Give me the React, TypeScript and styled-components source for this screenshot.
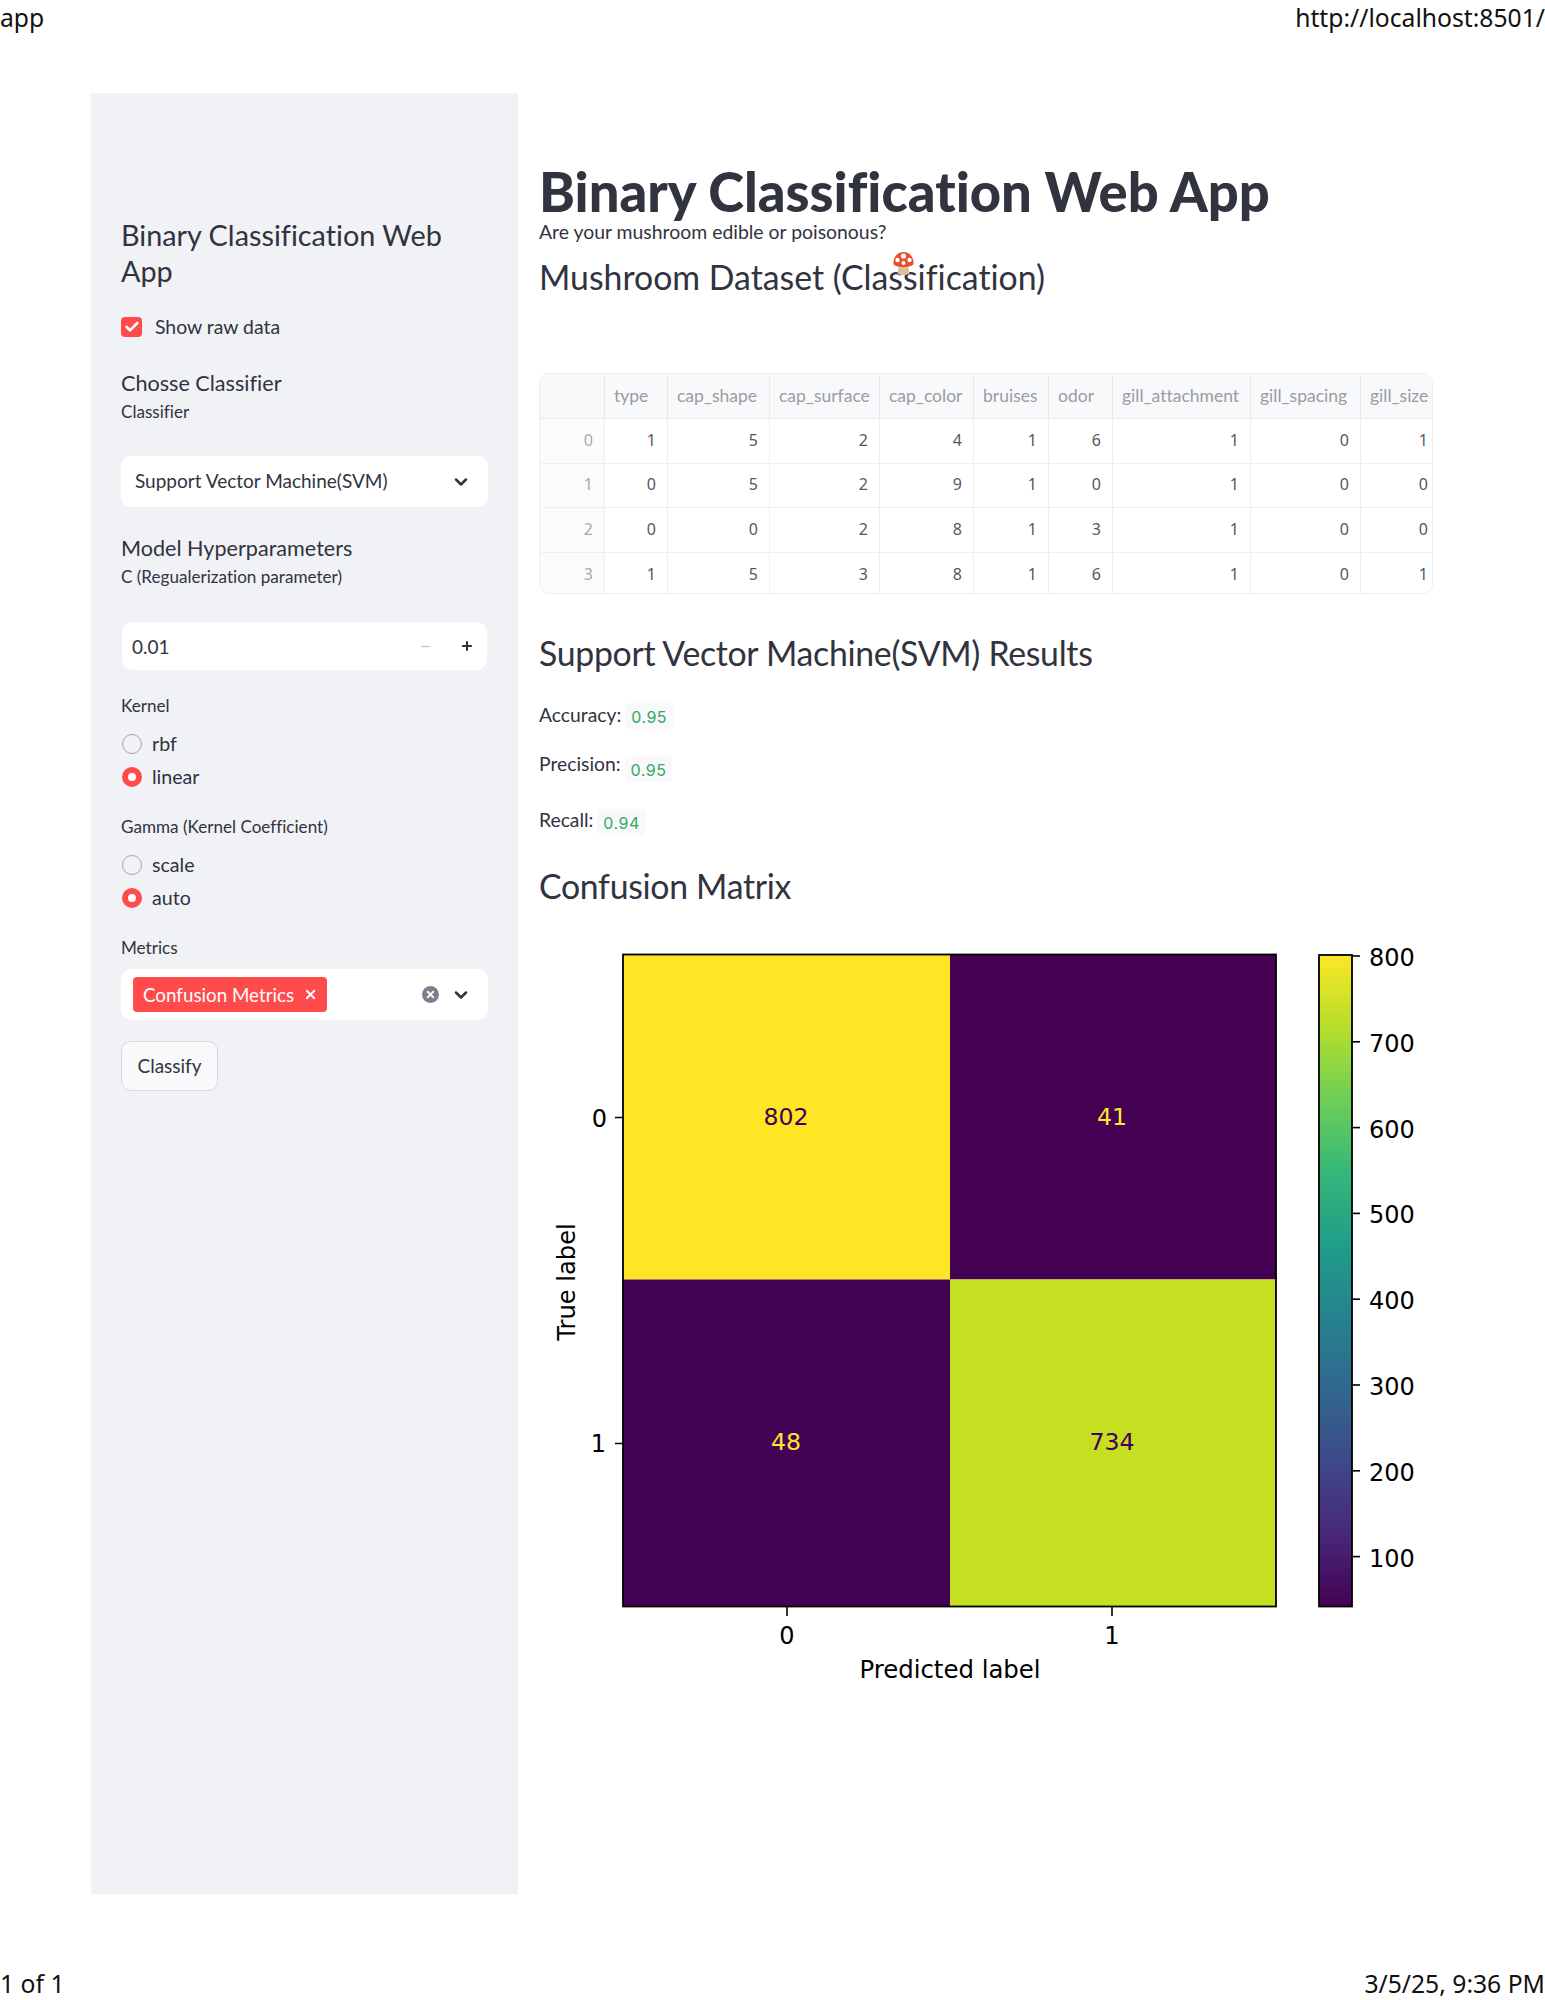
import * as React from "react";
import styled, { createGlobalStyle } from "styled-components";
import { ChevronDown, Check, X, Plus, Minus } from "lucide-react";

const GlobalStyle = createGlobalStyle`
  html, body {
    margin: 0;
    padding: 0;
    background: #fff;
  }
`;

const Page = styled.div`
  width: 1545px;
  height: 2000px;
  display: flex;
  flex-direction: column;
  color: #31333f;
  font-family: Lato, "Noto Sans", sans-serif;
  font-variant-ligatures: none;
  overflow: hidden;
`;

const PrintBar = styled.div`
  display: flex;
  justify-content: space-between;
  height: 36px;
  font-family: "Noto Sans", sans-serif;
  font-size: 24.7px;
  line-height: 36px;
  color: #111;
`;

const Body = styled.div`
  flex: 1;
  display: flex;
  padding: 57px 0 0 91px;
`;

const Sidebar = styled.aside`
  width: 427px;
  height: 1801px;
  box-sizing: border-box;
  padding: 124px 30px 0;
  background: #f0f2f6;
`;

const SideTitle = styled.div`
  font-size: 28.8px;
  line-height: 36px;
  width: 340px;
`;

const CheckRow = styled.div`
  display: flex;
  align-items: center;
  gap: 13px;
  height: 24px;
  margin-top: 26px;
  font-size: 19.4px;
`;

const CheckLabel = styled.span`
  margin-bottom: 2px;
`;

const CheckBox = styled.span`
  width: 21px;
  height: 20px;
  border-radius: 4px;
  background: #ff4b4b;
  color: #fff;
  display: flex;
  align-items: center;
  justify-content: center;
`;

const SideHeading = styled.div<{ $top: number }>`
  margin-top: ${(p) => p.$top}px;
  font-size: 21.6px;
  line-height: 28px;
`;

const FieldLabel = styled.div<{ $top: number }>`
  margin-top: ${(p) => p.$top}px;
  font-size: 17.1px;
  line-height: 20px;
`;

const SelectBox = styled.div<{ $top: number }>`
  margin-top: ${(p) => p.$top}px;
  height: 51px;
  box-sizing: border-box;
  padding: 0 17px 0 14px;
  display: flex;
  align-items: center;
  background: #fff;
  border-radius: 10px;
  font-size: 19px;
`;

const SelectText = styled.span`
  flex: 1;
  margin-bottom: 2px;
`;

const Grow = styled.span`
  flex: 1;
`;

const NumberBox = styled.div`
  margin: 35px 1px 0;
  height: 48px;
  box-sizing: border-box;
  padding-left: 10px;
  display: flex;
  align-items: center;
  background: #fff;
  border-radius: 10px;
  font-size: 19px;
`;

const StepButton = styled.span<{ $muted?: boolean }>`
  width: 41px;
  height: 100%;
  display: flex;
  align-items: center;
  justify-content: center;
  color: ${(p) => (p.$muted ? "#c9cbd0" : "#31333f")};
`;

const RadioRow = styled.div<{ $top: number }>`
  margin-top: ${(p) => p.$top}px;
  height: 24px;
  padding-left: 1px;
  display: flex;
  align-items: center;
  gap: 10px;
  font-size: 19.6px;
`;

const RadioText = styled.span`
  margin-bottom: 2px;
`;

const RadioDot = styled.span<{ $on?: boolean }>`
  width: 20px;
  height: 20px;
  box-sizing: border-box;
  border-radius: 50%;
  background: ${(p) => (p.$on ? "#ff4b4b" : "#f0f2f6")};
  border: ${(p) => (p.$on ? "6px solid #ff4b4b" : "1px solid #a3a5ab")};
  display: flex;
  &::after {
    content: "";
    flex: 1;
    border-radius: 50%;
    background: ${(p) => (p.$on ? "#fff" : "transparent")};
  }
`;

const Tag = styled.span`
  height: 35px;
  box-sizing: border-box;
  padding: 0 9px 0 10px;
  display: flex;
  align-items: center;
  gap: 9px;
  border-radius: 4px;
  background: #ff4b4b;
  color: #fff;
  font-size: 18.8px;
  white-space: nowrap;
  svg {
    flex-shrink: 0;
  }
`;

const ClearIcon = styled.span`
  width: 17px;
  height: 17px;
  margin-right: 12px;
  border-radius: 50%;
  background: #7d808c;
  color: #fff;
  display: flex;
  align-items: center;
  justify-content: center;
`;

const MultiBox = styled(SelectBox)`
  padding-left: 12px;
`;

const ClassifyButton = styled.div`
  margin-top: 21px;
  width: 97px;
  height: 50px;
  box-sizing: border-box;
  border: 1px solid #d8d9dd;
  border-radius: 10px;
  background: #f8f9fb;
  display: flex;
  align-items: center;
  justify-content: center;
  font-size: 19px;
  padding-bottom: 2px;
`;

const Main = styled.main`
  width: 894px;
  margin-left: 21px;
  padding-top: 69px;
`;

const Title = styled.h1`
  margin: 0;
  padding-bottom: 2px;
  font-size: 54.3px;
  line-height: 58px;
  font-weight: 900;
`;

const Subtitle = styled.div`
  padding-bottom: 2px;
  font-size: 19.4px;
  line-height: 20px;
`;

const Heading = styled.h2<{ $top: number; $spacing?: number }>`
  position: relative;
  margin: ${(p) => p.$top}px 0 0;
  padding-bottom: 4px;
  font-size: 33.8px;
  line-height: 40px;
  font-weight: 400;
  letter-spacing: ${(p) => p.$spacing ?? -0.3}px;
`;

const Mushroom = styled.svg`
  position: absolute;
  left: 354px;
  top: -5px;
`;

const Table = styled.div`
  margin-top: 72px;
  height: 221px;
  box-sizing: border-box;
  border: 1px solid #eeeff2;
  border-radius: 10px;
  overflow: hidden;
  display: grid;
  grid-template-columns: 65px 63px 102px 110px 94px 75px 64px 138px 110px 79px;
  grid-template-rows: 45px repeat(4, 44.6px);
  font-size: 17.5px;
`;

const HeadCell = styled.div`
  display: flex;
  align-items: center;
  padding: 0 0 2px 9px;
  background: #f8f9fb;
  color: #9a9ca3;
  border-right: 1px solid #e9eaee;
  border-bottom: 1px solid #e9eaee;
  white-space: nowrap;
`;

const Cell = styled.div<{ $index?: boolean }>`
  display: flex;
  align-items: center;
  justify-content: flex-end;
  padding: 0 11px 2px 0;
  color: ${(p) => (p.$index ? "#a8aab0" : "#55575f")};
  background: ${(p) => (p.$index ? "#fbfbfc" : "#fff")};
  border-right: 1px solid #eeeff2;
  border-bottom: 1px solid #eeeff2;
  font-family: "Noto Sans", sans-serif;
  font-size: 16px;
`;

const MetricRow = styled.div<{ $top: number }>`
  display: flex;
  align-items: flex-start;
  gap: 4px;
  margin-top: ${(p) => p.$top}px;
  font-size: 19.3px;
  line-height: 24px;
`;

const MetricValue = styled.span<{ $drop: number }>`
  margin-top: ${(p) => p.$drop}px;
  height: 26px;
  padding: 0 6px;
  background: #f8f9fa;
  border-radius: 4px;
  color: #34a862;
  font-family: Inter, sans-serif;
  font-size: 16px;
  letter-spacing: 0.5px;
  line-height: 28px;
`;

const ChartFrame = styled.svg`
  display: block;
  margin-top: 21px;
`;

const PageFoot = styled(PrintBar)`
  height: 33px;
  line-height: 33px;
`;

const headers = ["", "type", "cap_shape", "cap_surface", "cap_color", "bruises", "odor", "gill_attachment", "gill_spacing", "gill_size"];
const rows = [
  [0, 1, 5, 2, 4, 1, 6, 1, 0, 1],
  [1, 0, 5, 2, 9, 1, 0, 1, 0, 0],
  [2, 0, 0, 2, 8, 1, 3, 1, 0, 0],
  [3, 1, 5, 3, 8, 1, 6, 1, 0, 1],
];

const viridis = ["#440154", "#482878", "#3e4989", "#31688e", "#26828e", "#1f9e89", "#35b779", "#6ece58", "#b5de2b", "#fde725"];
const barTicks = [800, 700, 600, 500, 400, 300, 200, 100];

const ConfusionChart = () => (
  <ChartFrame width="894" height="780" viewBox="539 930 894 780" fontFamily="'DejaVu Sans', sans-serif" fill="#000">
    <defs>
      <linearGradient id="viridis" x1="0" y1="1" x2="0" y2="0">
        {viridis.map((c, i) => (
          <stop key={c} offset={i / (viridis.length - 1)} stopColor={c} />
        ))}
      </linearGradient>
    </defs>
    <rect x="623" y="953.5" width="327" height="325" fill="#fde725" />
    <rect x="950" y="953.5" width="326" height="325" fill="#440154" />
    <rect x="623" y="1278.5" width="327" height="327" fill="#440256" />
    <rect x="950" y="1278.5" width="326" height="327" fill="#c4e020" />
    <rect x="623" y="953.5" width="653" height="652" fill="none" stroke="#000" strokeWidth="1.8" />
    <path d="M615 1116.5H623M615 1442.5H623M787 1606V1615M1112 1606V1615" stroke="#000" strokeWidth="1.6" />
    <g fontSize="24">
      <text x="607" y="1126" textAnchor="end">0</text>
      <text x="606" y="1451" textAnchor="end">1</text>
      <text x="787" y="1643" textAnchor="middle">0</text>
      <text x="1112" y="1643" textAnchor="middle">1</text>
      <text x="950" y="1677" textAnchor="middle" fontSize="24.4">Predicted label</text>
      <text transform="translate(575 1281) rotate(-90)" textAnchor="middle" fontSize="24.2">True label</text>
    </g>
    <g fontSize="23.6" textAnchor="middle">
      <text x="786" y="1124" fill="#440154">802</text>
      <text x="1112" y="1124" fill="#fde725">41</text>
      <text x="786" y="1449" fill="#fde725">48</text>
      <text x="1112" y="1449" fill="#440154">734</text>
    </g>
    <rect x="1319" y="954" width="33" height="651.5" fill="url(#viridis)" stroke="#000" strokeWidth="1.8" />
    {barTicks.map((t, i) => (
      <g key={t}>
        <path d={`M1352 ${955 + i * 85.8}H1360`} stroke="#000" strokeWidth="1.6" />
        <text x="1369" y={965 + i * 85.8} fontSize="24">{t}</text>
      </g>
    ))}
  </ChartFrame>
);

export default function App() {
  return (
    <Page>
      <GlobalStyle />
      <PrintBar>
        <span>app</span>
        <span>http://localhost:8501/</span>
      </PrintBar>
      <Body>
        <Sidebar>
          <SideTitle>Binary Classification Web App</SideTitle>
          <CheckRow>
            <CheckBox><Check size={16} strokeWidth={4} /></CheckBox>
            <CheckLabel>Show raw data</CheckLabel>
          </CheckRow>
          <SideHeading $top={30}>Chosse Classifier</SideHeading>
          <FieldLabel $top={5}>Classifier</FieldLabel>
          <SelectBox $top={34}>
            <SelectText>Support Vector Machine(SVM)</SelectText>
            <ChevronDown size={20} strokeWidth={3} />
          </SelectBox>
          <SideHeading $top={27}>Model Hyperparameters</SideHeading>
          <FieldLabel $top={5}>C (Regualerization parameter)</FieldLabel>
          <NumberBox>
            <Grow>0.01</Grow>
            <StepButton $muted><Minus size={13} strokeWidth={3} /></StepButton>
            <StepButton><Plus size={14} strokeWidth={3.5} /></StepButton>
          </NumberBox>
          <FieldLabel $top={26}>Kernel</FieldLabel>
          <RadioRow $top={16}><RadioDot /><RadioText>rbf</RadioText></RadioRow>
          <RadioRow $top={9}><RadioDot $on /><RadioText>linear</RadioText></RadioRow>
          <FieldLabel $top={28}>Gamma (Kernel Coefficient)</FieldLabel>
          <RadioRow $top={16}><RadioDot /><RadioText>scale</RadioText></RadioRow>
          <RadioRow $top={9}><RadioDot $on /><RadioText>auto</RadioText></RadioRow>
          <FieldLabel $top={28}>Metrics</FieldLabel>
          <MultiBox $top={11}>
            <Tag>Confusion Metrics<X size={15} strokeWidth={3} /></Tag>
            <Grow />
            <ClearIcon><X size={11} strokeWidth={4} /></ClearIcon>
            <ChevronDown size={20} strokeWidth={3} />
          </MultiBox>
          <ClassifyButton>Classify</ClassifyButton>
        </Sidebar>
        <Main>
          <Title>Binary Classification Web App</Title>
          <Subtitle>Are your mushroom edible or poisonous?</Subtitle>
          <Heading $top={13} $spacing={0}>
            Mushroom Dataset (Classification)
            <Mushroom width="21" height="23" viewBox="0 0 21 23">
              <path d="M6 12h9l1.500 10c-4 1.300-8 1.300-12 0z" fill="#dcc09a" />
              <path d="M.5 12C0 5 4.500 0 10.500 0s10.500 5 10 12c-1 4-19 4-20 0z" fill="#e8502a" />
              <circle cx="10.500" cy="4" r="2.600" fill="#fff" />
              <circle cx="4.500" cy="8" r="2.200" fill="#fff" />
              <circle cx="16.500" cy="8" r="2.200" fill="#fff" />
              <circle cx="10.500" cy="11" r="2" fill="#fff" />
            </Mushroom>
          </Heading>
          <Table>
            {headers.map((h) => <HeadCell key={h}>{h}</HeadCell>)}
            {rows.map((row) =>
              row.map((v, i) => <Cell key={`${row[0]}-${i}`} $index={i === 0}>{v}</Cell>)
            )}
          </Table>
          <Heading $top={39}>Support Vector Machine(SVM) Results</Heading>
          <MetricRow $top={26}>Accuracy: <MetricValue $drop={0}>0.95</MetricValue></MetricRow>
          <MetricRow $top={23}>Precision: <MetricValue $drop={4}>0.95</MetricValue></MetricRow>
          <MetricRow $top={26}>Recall: <MetricValue $drop={1}>0.94</MetricValue></MetricRow>
          <Heading $top={31}>Confusion Matrix</Heading>
          <ConfusionChart />
        </Main>
      </Body>
      <PageFoot>
        <span>1 of 1</span>
        <span>3/5/25, 9:36 PM</span>
      </PageFoot>
    </Page>
  );
}
